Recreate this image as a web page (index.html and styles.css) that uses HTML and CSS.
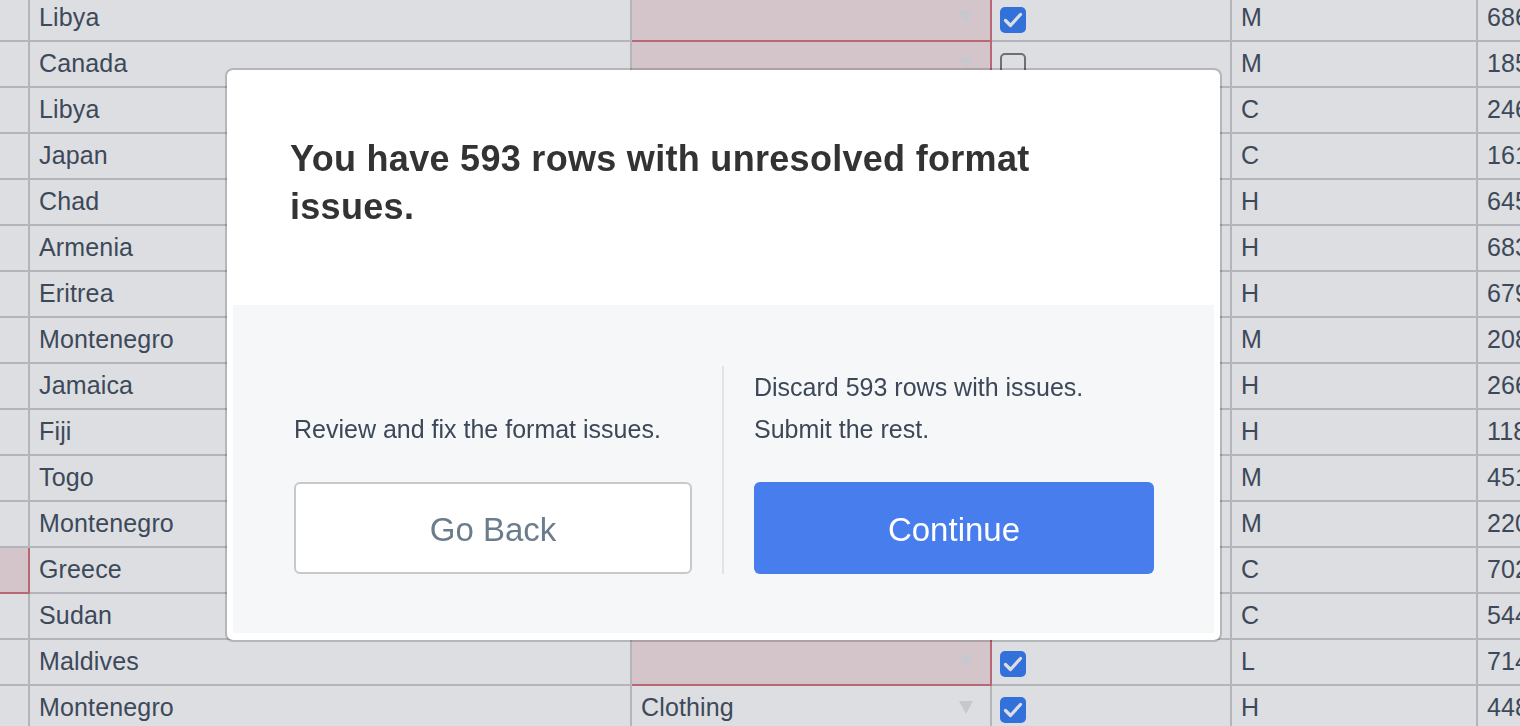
FILE: index.html
```html
<!DOCTYPE html>
<html lang="en">
<head>
<meta charset="utf-8">
<title>Unresolved format issues</title>
<link rel="stylesheet" href="styles.css">
</head>
<body>
<div class="sheet">
  <div class="row"><div class="cell c0"></div><div class="cell c1">Libya</div><div class="cell c2 invalid"><span class="val"></span><span class="caret"></span></div><div class="cell c3"><span class="cb on"><svg viewBox="0 0 26 26"><path d="M5.5 13.5 L10.5 18.5 L20.5 7.5"/></svg></span></div><div class="cell c4">M</div><div class="cell c5">6862</div></div>
  <div class="row"><div class="cell c0"></div><div class="cell c1">Canada</div><div class="cell c2 invalid"><span class="val"></span><span class="caret"></span></div><div class="cell c3"><span class="cb"></span></div><div class="cell c4">M</div><div class="cell c5">1857</div></div>
  <div class="row"><div class="cell c0"></div><div class="cell c1">Libya</div><div class="cell c2"><span class="val">Toys</span><span class="caret"></span></div><div class="cell c3"><span class="cb on"><svg viewBox="0 0 26 26"><path d="M5.5 13.5 L10.5 18.5 L20.5 7.5"/></svg></span></div><div class="cell c4">C</div><div class="cell c5">2466</div></div>
  <div class="row"><div class="cell c0"></div><div class="cell c1">Japan</div><div class="cell c2"><span class="val">Office</span><span class="caret"></span></div><div class="cell c3"><span class="cb"></span></div><div class="cell c4">C</div><div class="cell c5">1617</div></div>
  <div class="row"><div class="cell c0"></div><div class="cell c1">Chad</div><div class="cell c2"><span class="val">Food</span><span class="caret"></span></div><div class="cell c3"><span class="cb on"><svg viewBox="0 0 26 26"><path d="M5.5 13.5 L10.5 18.5 L20.5 7.5"/></svg></span></div><div class="cell c4">H</div><div class="cell c5">6459</div></div>
  <div class="row"><div class="cell c0"></div><div class="cell c1">Armenia</div><div class="cell c2"><span class="val">Cosmetics</span><span class="caret"></span></div><div class="cell c3"><span class="cb on"><svg viewBox="0 0 26 26"><path d="M5.5 13.5 L10.5 18.5 L20.5 7.5"/></svg></span></div><div class="cell c4">H</div><div class="cell c5">6831</div></div>
  <div class="row"><div class="cell c0"></div><div class="cell c1">Eritrea</div><div class="cell c2"><span class="val">Snacks</span><span class="caret"></span></div><div class="cell c3"><span class="cb"></span></div><div class="cell c4">H</div><div class="cell c5">6794</div></div>
  <div class="row"><div class="cell c0"></div><div class="cell c1">Montenegro</div><div class="cell c2"><span class="val">Clothing</span><span class="caret"></span></div><div class="cell c3"><span class="cb on"><svg viewBox="0 0 26 26"><path d="M5.5 13.5 L10.5 18.5 L20.5 7.5"/></svg></span></div><div class="cell c4">M</div><div class="cell c5">2083</div></div>
  <div class="row"><div class="cell c0"></div><div class="cell c1">Jamaica</div><div class="cell c2"><span class="val">Fruits</span><span class="caret"></span></div><div class="cell c3"><span class="cb"></span></div><div class="cell c4">H</div><div class="cell c5">2665</div></div>
  <div class="row"><div class="cell c0"></div><div class="cell c1">Fiji</div><div class="cell c2"><span class="val">Beverages</span><span class="caret"></span></div><div class="cell c3"><span class="cb on"><svg viewBox="0 0 26 26"><path d="M5.5 13.5 L10.5 18.5 L20.5 7.5"/></svg></span></div><div class="cell c4">H</div><div class="cell c5">1182</div></div>
  <div class="row"><div class="cell c0"></div><div class="cell c1">Togo</div><div class="cell c2"><span class="val">Household</span><span class="caret"></span></div><div class="cell c3"><span class="cb"></span></div><div class="cell c4">M</div><div class="cell c5">4518</div></div>
  <div class="row"><div class="cell c0"></div><div class="cell c1">Montenegro</div><div class="cell c2"><span class="val">Cereal</span><span class="caret"></span></div><div class="cell c3"><span class="cb on"><svg viewBox="0 0 26 26"><path d="M5.5 13.5 L10.5 18.5 L20.5 7.5"/></svg></span></div><div class="cell c4">M</div><div class="cell c5">2201</div></div>
  <div class="row"><div class="cell c0 invalid"></div><div class="cell c1">Greece</div><div class="cell c2"><span class="val">Baby Food</span><span class="caret"></span></div><div class="cell c3"><span class="cb"></span></div><div class="cell c4">C</div><div class="cell c5">7023</div></div>
  <div class="row"><div class="cell c0"></div><div class="cell c1">Sudan</div><div class="cell c2"><span class="val">Meat</span><span class="caret"></span></div><div class="cell c3"><span class="cb on"><svg viewBox="0 0 26 26"><path d="M5.5 13.5 L10.5 18.5 L20.5 7.5"/></svg></span></div><div class="cell c4">C</div><div class="cell c5">5442</div></div>
  <div class="row"><div class="cell c0"></div><div class="cell c1">Maldives</div><div class="cell c2 invalid"><span class="val"></span><span class="caret"></span></div><div class="cell c3"><span class="cb on"><svg viewBox="0 0 26 26"><path d="M5.5 13.5 L10.5 18.5 L20.5 7.5"/></svg></span></div><div class="cell c4">L</div><div class="cell c5">7144</div></div>
  <div class="row"><div class="cell c0"></div><div class="cell c1">Montenegro</div><div class="cell c2"><span class="val">Clothing</span><span class="caret"></span></div><div class="cell c3"><span class="cb on"><svg viewBox="0 0 26 26"><path d="M5.5 13.5 L10.5 18.5 L20.5 7.5"/></svg></span></div><div class="cell c4">H</div><div class="cell c5">4481</div></div>
</div>

<div class="backdrop"></div>

<div class="modal" role="dialog">
  <div class="modal-head">
    <h1 class="modal-title">You have 593 rows with unresolved format issues.</h1>
  </div>
  <div class="modal-foot">
    <div class="choice">
      <p class="choice-text">Review and fix the format issues.</p>
      <button class="btn btn-secondary" type="button">Go Back</button>
    </div>
    <div class="divider"></div>
    <div class="choice">
      <p class="choice-text">Discard 593 rows with issues.<br>Submit the rest.</p>
      <button class="btn btn-primary" type="button">Continue</button>
    </div>
  </div>
</div>
</body>
</html>
```

FILE: styles.css
```css
* { box-sizing: border-box; }

html, body {
  margin: 0;
  padding: 0;
  width: 1520px;
  height: 726px;
  overflow: hidden;
  background: #ffffff;
  font-family: "Liberation Sans", Arial, Helvetica, sans-serif;
}

.sheet {
  margin-top: -4px;
  width: 1620px;
}

.row {
  display: grid;
  grid-template-columns: 30px 602px 360px 240px 246px 142px;
  height: 46px;
}

.cell {
  display: flex;
  align-items: center;
  height: 46px;
  padding: 0 8px 2px 9px;
  border-right: 2px solid #d0d0d1;
  border-bottom: 2px solid #d0d0d1;
  font-size: 25px;
  letter-spacing: 0.15px;
  color: #475462;
  white-space: nowrap;
  overflow: hidden;
  background: #ffffff;
}

.cell.c3 { padding-left: 8px; }

.cell.invalid {
  background: #f4e3e4;
  border-right-color: #d4777f;
  border-bottom-color: #d4777f;
}

.c2 .val { flex: 1; }

.caret {
  width: 0;
  height: 0;
  margin-right: 9px;
  margin-top: 0;
  border-left: 7px solid transparent;
  border-right: 7px solid transparent;
  border-top: 13px solid #e6e6e9;
}

.cb {
  display: block;
  width: 26px;
  height: 26px;
  margin-top: 6px;
  border-radius: 5px;
  border: 2px solid #7e7f82;
  background: #ffffff;
}

.cb.on {
  border: none;
  background: #3b82f6;
}

.cb svg {
  display: block;
  width: 26px;
  height: 26px;
}

.cb svg path {
  fill: none;
  stroke: #ffffff;
  stroke-width: 3.2;
  stroke-linecap: round;
  stroke-linejoin: round;
}

.backdrop {
  position: fixed;
  inset: 0;
  background: rgba(3, 11, 40, 0.135);
}

.modal {
  position: absolute;
  left: 225px;
  top: 68px;
  width: 997px;
  height: 574px;
  padding: 0 6px 7px;
  background: #ffffff;
  background-clip: padding-box;
  border: 2px solid rgba(0, 0, 0, 0.18);
  border-radius: 8px;
}

.modal-head {
  height: 235px;
  padding: 65px 56px 0 57px;
}

.modal-title {
  margin: 0;
  max-width: 800px;
  font-size: 36px;
  line-height: 48px;
  letter-spacing: 0.3px;
  font-weight: 700;
  color: #333333;
}

.modal-foot {
  height: 328px;
  padding: 61px 60px 59px 61px;
  background: #f6f7f9;
  display: grid;
  grid-template-columns: 398px 2px 1fr;
  column-gap: 30px;
}

.choice {
  display: flex;
  flex-direction: column;
  justify-content: flex-end;
}

.choice-text {
  margin: 0 0 32px;
  font-size: 25px;
  line-height: 42px;
  color: #3c4858;
}

.divider {
  background: #e2e3e6;
}

.btn {
  display: block;
  width: 100%;
  height: 92px;
  padding-top: 4px;
  border-radius: 6px;
  font-family: "Liberation Sans", Arial, Helvetica, sans-serif;
  font-size: 33px;
  cursor: pointer;
}

.btn-secondary {
  background: #ffffff;
  border: 2px solid #c8c9cb;
  color: #6b7c8c;
}

.btn-primary {
  background: #477ded;
  border: none;
  color: #ffffff;
}
```
